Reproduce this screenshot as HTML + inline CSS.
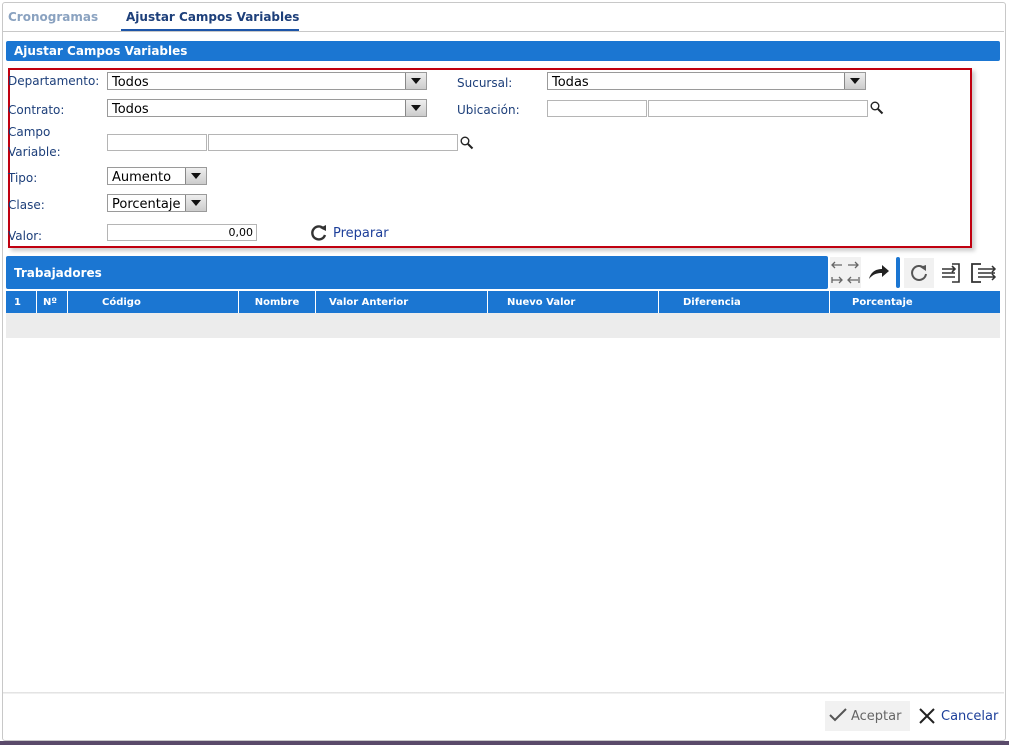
<!DOCTYPE html><html><head><style>
body{margin:0;width:1009px;height:745px;background:#fff;position:relative;overflow:hidden;font-family:"Liberation Sans","DejaVu Sans",sans-serif;}
.a{position:absolute}
.lbl{position:absolute;font-size:12px;color:#1d3f7a;font-family:"DejaVu Sans",sans-serif}
.sel{position:absolute;border:1px solid #9a9a9a;height:18px;background:#fff;font-size:13px;font-family:"DejaVu Sans",sans-serif;line-height:19px;padding-left:4px;box-sizing:border-box}
.arr{position:absolute;right:0;top:0;width:20px;height:16px;background:linear-gradient(#eee,#ccc);border-left:1px solid #888}
.arr:after{content:"";position:absolute;left:5px;top:5px;border-left:5px solid transparent;border-right:5px solid transparent;border-top:6px solid #111}
.inp{position:absolute;border:1px solid #b5b5b5;height:17px;box-sizing:border-box;background:#fff}
.th{position:absolute;top:291px;height:22px;background:#1b76d2;color:#fff;font-weight:bold;font-size:10px;line-height:24px;font-family:"DejaVu Sans",sans-serif;text-align:center}
</style></head><body>
<div class="a" style="left:2px;top:2px;width:1002px;height:737px;border:1px solid #c8c8c8;border-radius:3px"></div>
<div class="a" style="left:3px;top:31px;width:1001px;height:1px;background:#c8c8c8"></div>
<div class="a" style="left:8px;top:10px;font-size:12px;font-weight:bold;color:#8aa2c0;font-family:'DejaVu Sans',sans-serif">Cronogramas</div>
<div class="a" style="left:126px;top:10px;font-size:12px;font-weight:bold;color:#1d3f7a;font-family:'DejaVu Sans',sans-serif">Ajustar Campos Variables</div>
<div class="a" style="left:121px;top:29px;width:178px;height:2px;background:#1d55a8"></div>
<div class="a" style="left:6px;top:41px;width:994px;height:20px;background:#1b76d2;border-radius:2px;color:#fff;font-weight:bold;font-size:12px;line-height:20px;font-family:'DejaVu Sans',sans-serif;padding-left:8px;box-sizing:border-box">Ajustar Campos Variables</div>
<div class="a" style="left:8px;top:68px;width:964px;height:180px;border:2px solid #c00010;box-sizing:border-box;box-shadow:3px 3px 4px #ccc"></div>
<div class="lbl" style="left:8px;top:74px">Departamento:</div>
<div class="sel" style="left:107px;top:72px;width:320px">Todos<div class="arr"></div></div>
<div class="lbl" style="left:457px;top:76px">Sucursal:</div>
<div class="sel" style="left:547px;top:72px;width:319px">Todas<div class="arr"></div></div>
<div class="lbl" style="left:8px;top:103px">Contrato:</div>
<div class="sel" style="left:107px;top:99px;width:320px">Todos<div class="arr"></div></div>
<div class="lbl" style="left:457px;top:103px">Ubicación:</div>
<div class="inp" style="left:547px;top:100px;width:100px"></div>
<div class="inp" style="left:648px;top:100px;width:220px"></div>
<div class="lbl" style="left:8px;top:122px;line-height:20px">Campo<br>Variable:</div>
<div class="inp" style="left:107px;top:134px;width:100px"></div>
<div class="inp" style="left:208px;top:134px;width:250px"></div>
<svg class="a" style="left:460px;top:136px" width="14" height="14"><circle cx="5" cy="5" r="3.8" fill="none" stroke="#222" stroke-width="1.4"/><path d="M8 8L12.5 12.5" stroke="#222" stroke-width="2"/></svg>
<svg class="a" style="left:870px;top:101px" width="14" height="14"><circle cx="5" cy="5" r="3.8" fill="none" stroke="#222" stroke-width="1.4"/><path d="M8 8L12.5 12.5" stroke="#222" stroke-width="2"/></svg>
<div class="lbl" style="left:8px;top:171px">Tipo:</div>
<div class="sel" style="left:107px;top:167px;width:100px">Aumento<div class="arr"></div></div>
<div class="lbl" style="left:8px;top:198px">Clase:</div>
<div class="sel" style="left:107px;top:194px;width:100px;overflow:hidden">Porcentaje<div class="arr"></div></div>
<div class="lbl" style="left:8px;top:229px">Valor:</div>
<div class="inp" style="left:107px;top:224px;width:150px;font-size:11px;text-align:right;padding-right:3px;line-height:15px;font-family:'DejaVu Sans',sans-serif">0,00</div>
<svg class="a" style="left:310px;top:224px" width="18" height="18" viewBox="0 0 18 18"><path d="M14 5A6.5 6.5 0 1 0 15 11" fill="none" stroke="#333" stroke-width="2.4"/><path d="M10 4L16 1L16 7Z" fill="#333"/></svg>
<div class="a" style="left:333px;top:226px;font-size:13px;color:#1d3f9a;font-family:'DejaVu Sans',sans-serif">Preparar</div>
<div class="a" style="left:6px;top:256px;width:822px;height:33px;background:#1b76d2;border-radius:2px;color:#fff;font-weight:bold;font-size:12px;line-height:34px;font-family:'DejaVu Sans',sans-serif;padding-left:8px;box-sizing:border-box">Trabajadores</div>
<div class="a" style="left:830px;top:257px;width:31px;height:31px;background:#f1f1f1"></div>
<svg class="a" style="left:830px;top:257px" width="31" height="31" viewBox="0 0 31 31" fill="none" stroke="#666" stroke-width="1.3"><path d="M2 8H12M5 5L2 8L5 11M18 8H28M25 5L28 8L25 11M2 20V26M2 23H12M9 20L12 23L9 26M29 20V26M18 23H28M21 20L18 23L21 26"/></svg>
<svg class="a" style="left:867px;top:262px" width="24" height="20" viewBox="0 0 24 20"><path d="M2 17C4 9 10 7 15 7V3L22 9L15 15V11C10 11 6 12 2 17Z" fill="#222"/></svg>
<div class="a" style="left:896px;top:257px;width:4px;height:31px;background:#1b76d2;border-radius:2px"></div>
<div class="a" style="left:904px;top:258px;width:30px;height:30px;background:#f1f1f1"></div>
<svg class="a" style="left:909px;top:263px" width="20" height="20" viewBox="0 0 20 20"><path d="M15 5A7 7 0 1 0 17 11" fill="none" stroke="#555" stroke-width="2"/><path d="M11 4L17 2L17 8Z" fill="#555"/></svg>
<svg class="a" style="left:940px;top:262px" width="22" height="22" viewBox="0 0 22 22"><path d="M12 2H19V20H12" fill="none" stroke="#333" stroke-width="1.6"/><path d="M2 7H15M2 11H15M2 15H15M12 4L15 7L12 10" fill="none" stroke="#333" stroke-width="1.6"/></svg>
<svg class="a" style="left:970px;top:262px" width="28" height="22" viewBox="0 0 28 22"><path d="M11 2H2V20H11" fill="none" stroke="#333" stroke-width="1.8"/><path d="M8 7H25M8 11H25M8 15H25M22 4L25 7L22 10M22 12L25 15L22 18" fill="none" stroke="#333" stroke-width="1.5"/></svg>
<div class="th" style="left:6px;width:30px;text-align:left;padding-left:8px;box-sizing:border-box">1</div>
<div class="th" style="left:37px;width:30px;text-align:left;padding-left:6px;box-sizing:border-box">Nº</div>
<div class="th" style="left:68px;width:170px;text-align:left;padding-left:34px;box-sizing:border-box">Código</div>
<div class="th" style="left:239px;width:76px">Nombre</div>
<div class="th" style="left:316px;width:171px;text-align:left;padding-left:13px;box-sizing:border-box">Valor Anterior</div>
<div class="th" style="left:488px;width:170px;text-align:left;padding-left:19px;box-sizing:border-box">Nuevo Valor</div>
<div class="th" style="left:659px;width:170px;text-align:left;padding-left:24px;box-sizing:border-box">Diferencia</div>
<div class="th" style="left:830px;width:170px;text-align:left;padding-left:22px;box-sizing:border-box">Porcentaje</div>
<div class="a" style="left:6px;top:313px;width:994px;height:25px;background:#ececec"></div>
<div class="a" style="left:3px;top:692px;width:1001px;height:2px;background:linear-gradient(#ddd,#f6f6f6)"></div>
<div class="a" style="left:825px;top:701px;width:85px;height:30px;background:#f1f1f1"></div>
<svg class="a" style="left:828px;top:707px" width="20" height="16" viewBox="0 0 20 16"><path d="M2 8L7 13L18 2" fill="none" stroke="#555" stroke-width="2"/></svg>
<div class="a" style="left:851px;top:709px;font-size:13px;color:#666;font-family:'DejaVu Sans',sans-serif">Aceptar</div>
<svg class="a" style="left:918px;top:707px" width="18" height="18" viewBox="0 0 18 18"><path d="M2 2L16 16M16 2L2 16" stroke="#222" stroke-width="2"/></svg>
<div class="a" style="left:941px;top:709px;font-size:13px;color:#1d3f9a;font-family:'DejaVu Sans',sans-serif">Cancelar</div>
<div class="a" style="left:0;top:741px;width:1009px;height:4px;background:#5a4a6a"></div>
</body></html>
